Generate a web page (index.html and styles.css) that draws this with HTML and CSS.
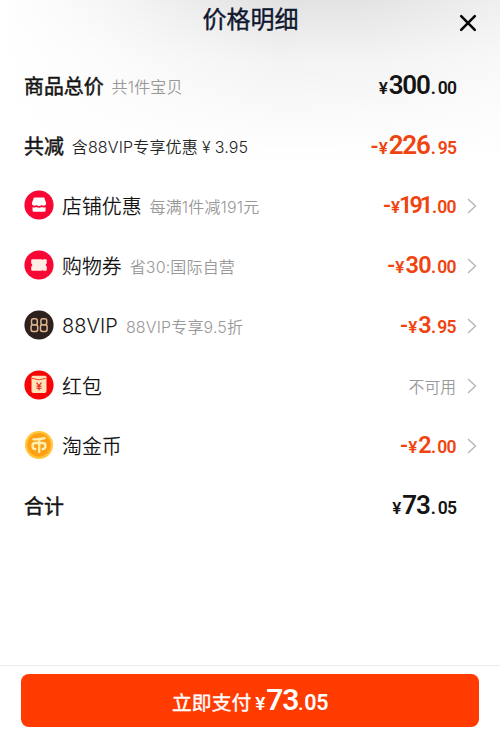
FILE: index.html
```html
<!DOCTYPE html>
<html lang="zh-CN">
<head>
<meta charset="utf-8">
<title>价格明细</title>
<link rel="stylesheet" href="styles.css">
</head>
<body>
<div class="sheet">
  <header class="header">
    <h1 class="title">价格明细</h1>
    <svg class="close" viewBox="0 0 18 18"><path d="M2.2 2.2 15.8 15.8M15.8 2.2 2.2 15.8"/></svg>
  </header>
  <main class="rows">
    <div class="row">
      <span class="label strong">商品总价</span><span class="note">共1件宝贝</span>
      <span class="price total"><span class="yen">¥</span><span class="int">300</span><span class="dot">.</span><span class="dec">00</span></span>
    </div>
    <div class="row">
      <span class="label strong">共减</span><span class="note dark">含88VIP专享优惠<span class="note-yen">¥</span>3.95</span>
      <span class="price total off"><span class="minus">-</span><span class="yen">¥</span><span class="int">226</span><span class="dot">.</span><span class="dec">95</span></span>
    </div>
    <div class="row">
      <svg class="icon" viewBox="0 0 30 30"><circle cx="15" cy="15" r="14.6" fill="#f80735"/><path d="M10 7.600h10.200l1.900 5.400c.2 2.700-2.700 3.300-4.500 1.900-1.500 1.400-3.700 1.400-5.200 0-1.800 1.400-4.700.8-4.500-1.900Z" fill="#fff"/><path d="M8.500 17.300q1.700.7 3.600-.3 3 1.500 5.900 0 1.900 1 3.600.3v2.900q0 1.500-1.500 1.500H10q-1.500 0-1.500-1.500Z" fill="#fff"/></svg>
      <span class="label">店铺优惠</span><span class="note">每满1件减191元</span>
      <span class="price off narrow"><span class="minus">-</span><span class="yen">¥</span><span class="int">191</span><span class="dot">.</span><span class="dec">00</span></span>
      <svg class="arrow" viewBox="0 0 10 16"><path d="M1.500 1.500 8.500 8l-7 6.500"/></svg>
    </div>
    <div class="row">
      <svg class="icon" viewBox="0 0 30 30"><circle cx="15" cy="15" r="14.600" fill="#f80735"/><path d="M8.400 9.200h9.300l.8.900.8-.9h2.300q1.200 0 1.200 1.200v3.100a1.600 1.600 0 0 0 0 3v3.100q0 1.200-1.200 1.200h-2.300l-.8-.9-.8.9H8.400q-1.200 0-1.200-1.200v-3.100a1.600 1.600 0 0 0 0-3v-3.100q0-1.200 1.200-1.200Z" fill="#ffeee6"/></svg>
      <span class="label">购物券</span><span class="note">省30:国际自营</span>
      <span class="price off"><span class="minus">-</span><span class="yen">¥</span><span class="int">30</span><span class="dot">.</span><span class="dec">00</span></span>
      <svg class="arrow" viewBox="0 0 10 16"><path d="M1.500 1.500 8.500 8l-7 6.500"/></svg>
    </div>
    <div class="row">
      <svg class="icon" viewBox="0 0 30 30"><circle cx="15" cy="15" r="14.600" fill="#2d211e"/><g fill="none" stroke="#dfb38e" stroke-width="1.500"><rect x="7.500" y="8.700" width="5.800" height="6.100" rx="1.900"/><rect x="7.100" y="14.800" width="6.600" height="6.600" rx="1.900"/><rect x="16.900" y="8.700" width="5.800" height="6.100" rx="1.900"/><rect x="16.500" y="14.800" width="6.600" height="6.600" rx="1.900"/></g></svg>
      <span class="label latin">88VIP</span><span class="note">88VIP专享9.5折</span>
      <span class="price off"><span class="minus">-</span><span class="yen">¥</span><span class="int">3</span><span class="dot">.</span><span class="dec">95</span></span>
      <svg class="arrow" viewBox="0 0 10 16"><path d="M1.500 1.500 8.500 8l-7 6.500"/></svg>
    </div>
    <div class="row">
      <svg class="icon" viewBox="0 0 30 30"><circle cx="15" cy="15" r="14.600" fill="#f50505"/><path d="M7.500 7.200q0-1.500 1.500-1.500h12q1.500 0 1.500 1.500v13.800q0 2-2 2h-11q-2 0-2-2Z" fill="#ffe2b8"/><path d="M7.800 8.300q7.200 3 14.400 0" fill="none" stroke="#f3402b" stroke-width="1"/><path d="m12.600 12.700 2.400 3.200 2.400-3.200M15 15.800v4.500M12.400 16.200h5.200M12.400 18.200h5.200" fill="none" stroke="#e51c16" stroke-width="1.100"/></svg>
      <span class="label">红包</span>
      <span class="status">不可用</span>
      <svg class="arrow" viewBox="0 0 10 16"><path d="M1.500 1.500 8.500 8l-7 6.500"/></svg>
    </div>
    <div class="row">
      <svg class="icon" viewBox="0 0 30 30"><circle cx="15" cy="15" r="14" fill="#ffc63a"/><circle cx="15" cy="15" r="11.700" fill="#ff9f14"/><path d="M9.500 9.300q6 .3 11.200-1.100M15.200 9v13M11.400 19.200Q8.500 19 8.500 16t3-3h7q3 0 3 3t-2.900 3.200" fill="none" stroke="#fff0b4" stroke-width="2.300" stroke-linecap="round"/></svg>
      <span class="label">淘金币</span>
      <span class="price off"><span class="minus">-</span><span class="yen">¥</span><span class="int">2</span><span class="dot">.</span><span class="dec">00</span></span>
      <svg class="arrow" viewBox="0 0 10 16"><path d="M1.500 1.500 8.500 8l-7 6.500"/></svg>
    </div>
    <div class="row">
      <span class="label strong">合计</span>
      <span class="price total"><span class="yen">¥</span><span class="int">73</span><span class="dot">.</span><span class="dec">05</span></span>
    </div>
  </main>
  <footer class="footer">
    <button class="pay"><span class="pay-text">立即支付</span><span class="price pay-price"><span class="yen">¥</span><span class="int">73</span><span class="dot">.</span><span class="dec">05</span></span></button>
  </footer>
</div>
</body>
</html>
```

FILE: styles.css
```css
* { box-sizing: border-box; }
body { margin: 0; font-family: Inter, "Noto Sans CJK SC", sans-serif; color: #141414; background: #fff; }
.sheet {
  height: 737px;
  display: flex;
  flex-direction: column;
  background:
    linear-gradient(to bottom, rgba(255,255,255,0) 0, rgba(255,255,255,.6) 60px, #fff 160px),
    linear-gradient(to right, #fff 0, #f7f7f7 20%, #e2e2e2 55%, #e4e4e4 75%, #efefef 100%);
}
.header {
  height: 56px;
  display: grid;
  grid-template-columns: 1fr auto 1fr;
  padding: 0 23px 0 24px;
}
.title {
  grid-column: 2;
  margin: 0;
  font-size: 24px;
  line-height: 40px;
  font-weight: 400;
  color: #10182f;
  -webkit-text-stroke: .4px #10182f;
}
.close { justify-self: end; width: 18px; height: 18px; margin-top: 14px; fill: none; stroke: #080808; stroke-width: 2.6; stroke-linecap: round; }
.rows { flex: 1; padding-left: 24px; padding-right: 23px; }
.row { height: 60px; display: flex; align-items: center; }
.icon { width: 30px; height: 30px; margin-right: 8px; margin-bottom: 1.4px; flex: none; }
.label { font-size: 19.9px; line-height: 28px; padding-top: 2px; font-weight: 350; white-space: nowrap; }
.strong { font-weight: 400; -webkit-text-stroke: .5px #141414; }
.latin { padding-top: 0; letter-spacing: .1px; }
.note { margin-left: 8px; padding-top: 1px; font-size: 16px; line-height: 24px; font-weight: 350; color: #999; white-space: nowrap; letter-spacing: .15px; }
.dark { color: #242424; }
.note-yen { margin: 0 4px; }
.price { margin-left: auto; display: flex; align-items: baseline; font-family: Roboto, sans-serif; font-weight: 600; line-height: 30px; }
.row .price { padding-right: 1px; }
.price:last-child { margin-right: 20px; }
.off { color: #f04410; }
.yen { font-size: 17px; margin-right: 1px; }
.minus { font-size: 22px; line-height: 1; }
.int { font-size: 23.5px; letter-spacing: -.6px; }
.narrow .int { letter-spacing: -3.1px; margin-right: 2px; }
.narrow .yen { margin-right: -1px; }
.dot { font-size: 18px; margin: 0 1px 0 0; }
.dec { font-size: 17.5px; letter-spacing: -.6px; }
.narrow .dot { margin: 0; }
.total .int { font-size: 26px; letter-spacing: -1.2px; }
.total .dot { margin: 0 2px 0 1px; }
.total .dec { letter-spacing: -.9px; }
.status { margin-left: auto; padding-right: 1px; font-size: 15.8px; font-weight: 350; color: #999; }
.arrow { width: 10px; height: 16px; margin-left: 10px; flex: none; fill: none; stroke: #bcbcbc; stroke-width: 1.7; stroke-linecap: round; stroke-linejoin: round; }
.footer { height: 72px; border-top: 1px solid #ececec; padding: 8px 21px 10px; }
.pay {
  width: 100%;
  height: 53px;
  border: 0;
  border-radius: 8px;
  background: #ff3b00;
  color: #fff;
  display: flex;
  justify-content: center;
  align-items: baseline;
  padding: 3px 0 0;
  font-family: inherit;
}
.pay-text { font-size: 19.800px; line-height: 53px; font-weight: 400; -webkit-text-stroke: .4px #fff; }
.pay .pay-price { margin: 0 0 0 4px; }
.pay .int { font-size: 30px; letter-spacing: -1.2px; }
.pay .dec { font-size: 21.500px; letter-spacing: -.5px; }
.pay .yen { font-size: 19px; }
```
